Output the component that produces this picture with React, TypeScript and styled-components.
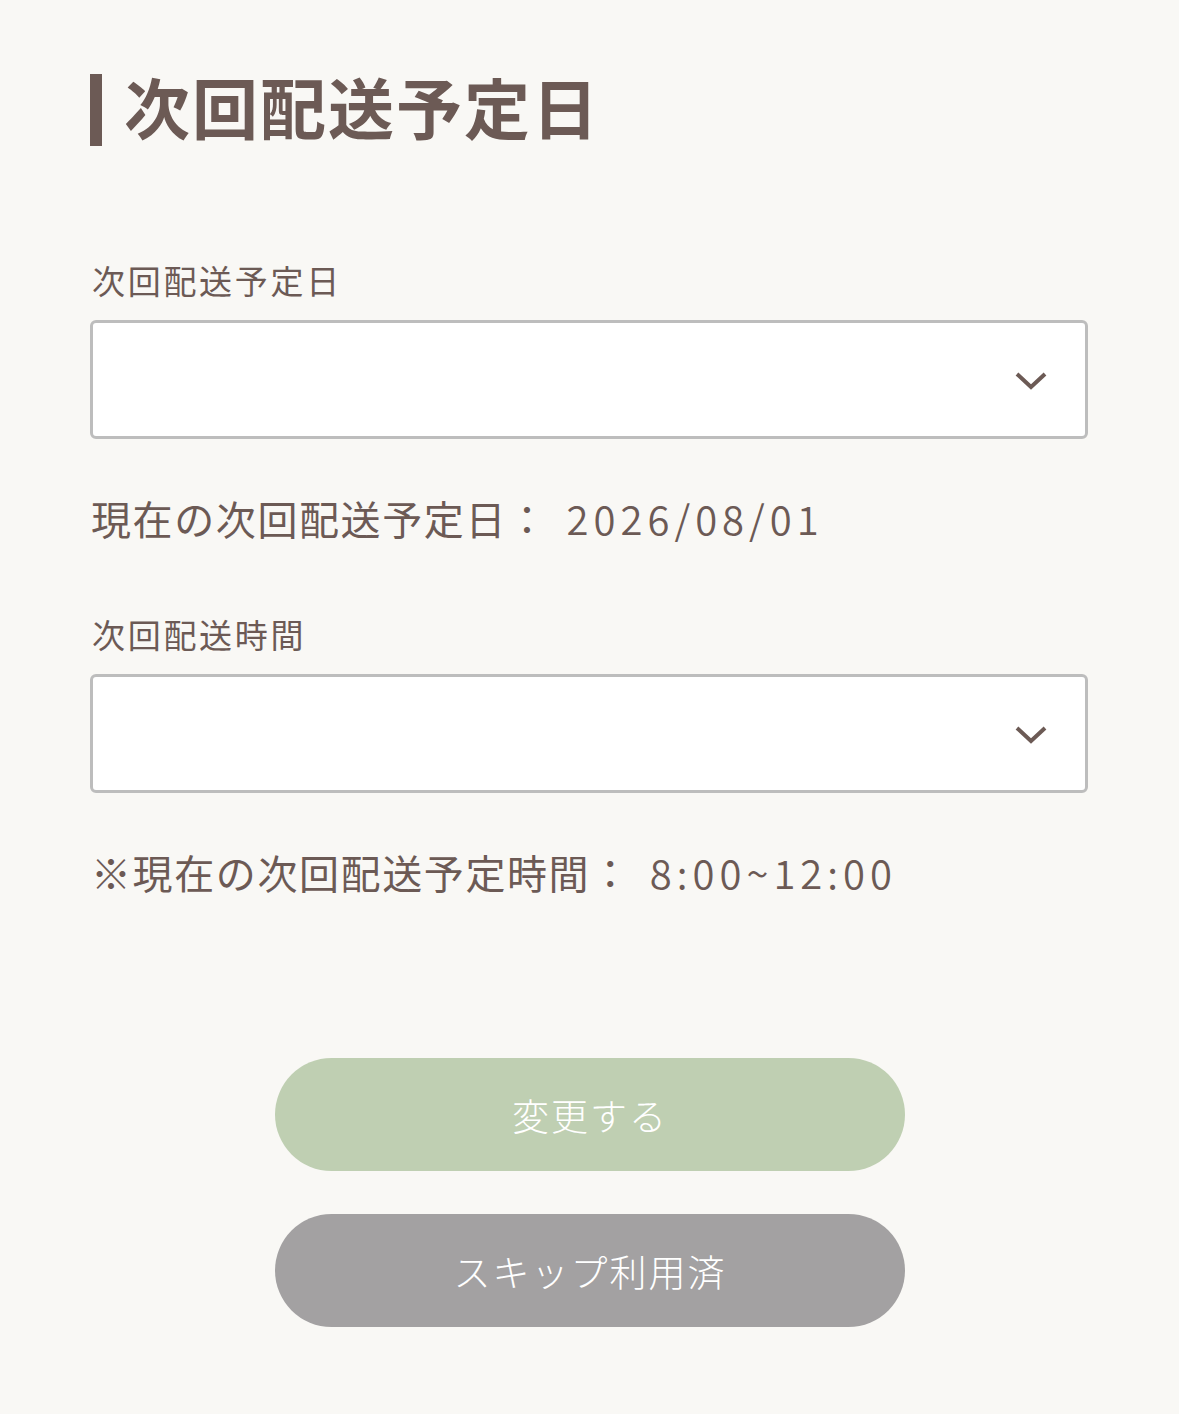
import React from "react";
import styled, { createGlobalStyle } from "styled-components";

const Global = createGlobalStyle`
  html, body { margin: 0; padding: 0; background: #f9f8f5; }
  body { font-family: "Noto Sans CJK JP", "Noto Sans", sans-serif; color: #6c5a55; }
  * { box-sizing: border-box; }
`;

const Page = styled.div`
  min-height: 1414px;
  padding: 74px 91px 0 90px;
  display: flex;
  flex-direction: column;
`;

const Title = styled.h1`
  margin: 0;
  display: flex;
  align-items: center;
  gap: 22px;
  height: 72px;
  font-size: 66px;
  font-weight: 700;
  letter-spacing: 2px;
  line-height: 72px;
  color: #6c5a55;
  &::before {
    content: "";
    width: 12px;
    height: 72px;
    background: #6c5a55;
    flex: none;
  }
`;

const TitleText = styled.span`
  margin-top: -10px;
`;

const Label = styled.div<{ $top: number }>`
  margin-top: ${(p) => p.$top}px;
  font-size: 33px;
  line-height: 40px;
  letter-spacing: 2.7px;
  padding-left: 2px;
`;

const SelectBox = styled.div`
  margin-top: 20px;
  height: 119px;
  background: #fff;
  border: 3px solid #bdbdbd;
  border-radius: 6px;
  display: flex;
  align-items: center;
  justify-content: flex-end;
  padding-right: 37px;
  padding-top: 3px;
`;

const Note = styled.div`
  margin-top: 54px;
  font-size: 40px;
  line-height: 50px;
  letter-spacing: 1.6px;
  padding-left: 1px;
`;

const Value = styled.span`
  display: inline-block;
  letter-spacing: 5px;
  font-weight: 350;
  margin-left: 18px;
`;

const Buttons = styled.div`
  margin-top: 161px;
  display: flex;
  flex-direction: column;
  align-items: center;
  gap: 43px;
`;

const Pill = styled.button<{ $bg: string }>`
  width: 630px;
  height: 113px;
  border: none;
  border-radius: 57px;
  background: ${(p) => p.$bg};
  color: #fff;
  font-family: inherit;
  font-size: 37px;
  font-weight: 300;
  letter-spacing: 2px;
  padding: 0;
  margin-left: 2px;
`;

const Chevron = () => (
  <svg width="34" height="20" viewBox="0 0 34 20" aria-hidden>
    <path d="M3 3 L17 16 L31 3" fill="none" stroke="#6c5a55" strokeWidth="4" />
  </svg>
);

export default function App() {
  return (
    <>
      <Global />
      <Page>
        <Title>
          <TitleText>次回配送予定日</TitleText>
        </Title>
        <Label $top={114}>次回配送予定日</Label>
        <SelectBox>
          <Chevron />
        </SelectBox>
        <Note>
          現在の次回配送予定日：<Value>2026/08/01</Value>
        </Note>
        <Label $top={71}>次回配送時間</Label>
        <SelectBox>
          <Chevron />
        </SelectBox>
        <Note>
          ※現在の次回配送予定時間：<Value>8:00~12:00</Value>
        </Note>
        <Buttons>
          <Pill $bg="#bfcfb2">変更する</Pill>
          <Pill $bg="#a3a1a2">スキップ利用済</Pill>
        </Buttons>
      </Page>
    </>
  );
}
